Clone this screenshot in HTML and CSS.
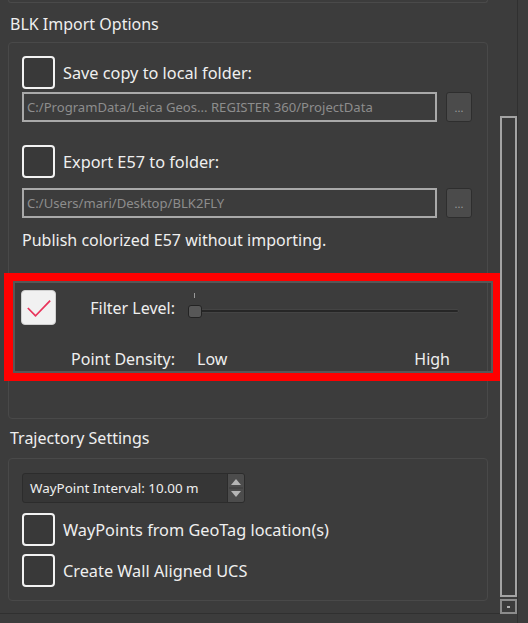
FILE: index.html
```html
<!DOCTYPE html>
<html lang="en">

<head>
    <meta charset="UTF-8" />
    <meta name="viewport" content="width=device-width, initial-scale=1.0" />
    <title>BLK Import Options</title>
    <link rel="stylesheet" href="styles.css">
</head>

<body>
    <div class="window">
        <div class="main">
            <div class="group-stub"></div>

            <div class="section-title">BLK Import Options</div>
            <div class="group group-import">
                <label class="check-row">
                    <span class="check"></span>
                    <span class="check-label">Save copy to local folder:</span>
                </label>
                <div class="path-row path-first">
                    <div class="path-input">C:/ProgramData/Leica Geos... REGISTER 360/ProjectData</div>
                    <button class="browse">...</button>
                </div>

                <label class="check-row row-export">
                    <span class="check"></span>
                    <span class="check-label">Export E57 to folder:</span>
                </label>
                <div class="path-row path-second">
                    <div class="path-input">C:/Users/mari/Desktop/BLK2FLY</div>
                    <button class="browse">...</button>
                </div>

                <div class="note">Publish colorized E57 without importing.</div>

                <div class="filter">
                    <span class="check checked">
                        <svg viewBox="0 0 34 34" width="34" height="34">
                            <polyline points="6,17 14,25 29,9.5" fill="none" stroke="#e8335a" stroke-width="1.8" stroke-linejoin="round" />
                        </svg>
                    </span>
                    <span class="filter-label">Filter Level:</span>
                    <div class="slider">
                        <span class="tick"></span>
                        <span class="track"></span>
                        <span class="handle"></span>
                    </div>
                    <span></span>
                    <span class="filter-label density-label">Point Density:</span>
                    <div class="density">
                        <span>Low</span>
                        <span>High</span>
                    </div>
                </div>
            </div>

            <div class="section-title title-trajectory">Trajectory Settings</div>
            <div class="group group-trajectory">
                <div class="spinbox">
                    <span class="spin-text">WayPoint Interval: 10.00 m</span>
                    <span class="spin-buttons">
                        <svg viewBox="0 0 16 28" width="16" height="28">
                            <polygon points="3,11 13,11 8,5" fill="#b4b4b4" />
                            <polygon points="3,17 13,17 8,23" fill="#b4b4b4" />
                            <line x1="1" y1="14" x2="15" y2="14" stroke="#3a3a3a" stroke-width="1" />
                        </svg>
                    </span>
                </div>
                <label class="check-row row-geotag">
                    <span class="check"></span>
                    <span class="check-label">WayPoints from GeoTag location(s)</span>
                </label>
                <label class="check-row row-wall">
                    <span class="check"></span>
                    <span class="check-label">Create Wall Aligned UCS</span>
                </label>
            </div>
        </div>

        <div class="scroll-col">
            <div class="scroll-handle"></div>
            <div class="scroll-button"><span class="scroll-dot"></span></div>
        </div>
    </div>
</body>

</html>
```

FILE: styles.css
```css
body {
    margin: 0;
    background-color: #3c3c3c;
    font-family: "Noto Sans", "Open Sans", sans-serif;
    color: #efefef;
}

.window {
    display: flex;
    width: 528px;
    height: 623px;
    overflow: hidden;
}

.main {
    width: 500px;
    height: 613px;
    border-bottom: 1px solid #303030;
    flex-shrink: 0;
}

/* tail end of the group above, scrolled off */
.group-stub {
    margin-left: 8px;
    width: 478px;
    height: 2px;
    border: 1px solid #4a4a4a;
    border-top: none;
    border-radius: 0 0 3px 3px;
}

.section-title {
    font-size: 16px;
    line-height: 22px;
    padding: 10px 0 7px 10px;
}

.title-trajectory {
    padding-top: 8px;
    padding-bottom: 9px;
}

.group {
    margin-left: 8px;
    width: 465px;
    border: 1px solid #494949;
    border-radius: 4px;
    padding: 13px 0 0 13px;
}

.group-import {
    height: 362px;
}

.group-trajectory {
    padding-top: 14px;
    height: 127px;
}

.check-row {
    display: flex;
    align-items: center;
    gap: 8px;
    height: 33px;
}

.check {
    width: 33px;
    height: 33px;
    box-sizing: border-box;
    border: 2px solid #f2f2f2;
    border-radius: 4px;
    background-color: #393939;
    flex-shrink: 0;
}

.check.checked {
    width: 35px;
    height: 35px;
    border: 1px solid #d0d0d0;
    background-color: #f1f1f1;
    display: flex;
    align-items: center;
    justify-content: center;
}

.check-label {
    font-size: 16.3px;
}

.path-row {
    display: flex;
    gap: 9px;
    height: 30px;
}

.path-first {
    margin-top: 3px;
}

.row-export {
    margin-top: 23px;
}

.path-second {
    margin-top: 10px;
}

.path-input {
    width: 415px;
    box-sizing: border-box;
    border: 2px solid #a9a9a9;
    padding: 0 3px;
    font-size: 13.1px;
    line-height: 26px;
    color: #8d8d8d;
    white-space: nowrap;
    overflow: hidden;
}

.browse {
    width: 26px;
    height: 30px;
    padding: 0;
    border: 1px solid #2e2e2e;
    border-radius: 3px;
    background-color: #4b4b4b;
    color: #9a9a9a;
    font-family: inherit;
    font-size: 11px;
    line-height: 30px;
}

.note {
    font-size: 16px;
    line-height: 22px;
    margin-top: 11px;
}

/* highlighted filter block */
.filter {
    margin: 22px 0 0 -18px;
    width: 497px;
    height: 108px;
    box-sizing: border-box;
    border: 8px solid #ff0000;
    border-left-width: 9px;
    box-shadow: inset 0 0 0 2px #575757;
    padding: 9px 0 0 8px;
    display: grid;
    grid-template-columns: 35px 119px 284px;
    grid-template-rows: 35px 1fr;
    font-size: 16px;
}

.filter-label {
    text-align: right;
    align-self: center;
    line-height: 22px;
}

.slider {
    position: relative;
    margin-left: 13px;
    height: 35px;
}

.tick {
    position: absolute;
    left: 6px;
    top: 3px;
    width: 1px;
    height: 5px;
    background-color: #9a9a9a;
}

.track {
    position: absolute;
    left: 6px;
    right: 0;
    top: 19px;
    height: 4px;
    border-radius: 2px;
    background-color: #262626;
    border: 1px solid #444;
    box-sizing: border-box;
}

.handle {
    position: absolute;
    left: 0;
    top: 15px;
    width: 14px;
    height: 13px;
    box-sizing: border-box;
    border: 1px solid #232323;
    border-radius: 3px;
    background-color: #575757;
}

.density-label {
    align-self: end;
    padding-bottom: 3px;
}

.density {
    display: flex;
    justify-content: space-between;
    align-self: end;
    padding: 0 9px 3px 22px;
    line-height: 22px;
}

.spinbox {
    display: flex;
    justify-content: space-between;
    width: 223px;
    height: 30px;
    box-sizing: border-box;
    border: 1px solid #2c2c2c;
    border-radius: 3px;
    background-color: #363636;
}

.spin-text {
    font-size: 13.4px;
    line-height: 28px;
    padding-left: 7px;
}

.spin-buttons {
    width: 16px;
    height: 28px;
    background-color: #4c4c4c;
    border-left: 1px solid #2c2c2c;
    border-radius: 0 2px 2px 0;
}

.spin-buttons svg {
    display: block;
}

.row-geotag {
    margin-top: 10px;
}

.row-wall {
    margin-top: 8px;
}

.scroll-col {
    width: 17px;
    display: flex;
    flex-direction: column;
    padding-top: 116px;
    border-right: 1px solid #303030;
}

.scroll-handle {
    height: 481px;
    box-sizing: border-box;
    border: 2px solid #a3a3a3;
    background-color: #3a3a3a;
}

.scroll-button {
    margin-top: 2px;
    height: 15px;
    box-sizing: border-box;
    border: 2px solid #8c8c8c;
    display: flex;
    align-items: center;
    justify-content: center;
}

.scroll-dot {
    width: 3px;
    height: 2px;
    background-color: #b0b0b0;
}
```
